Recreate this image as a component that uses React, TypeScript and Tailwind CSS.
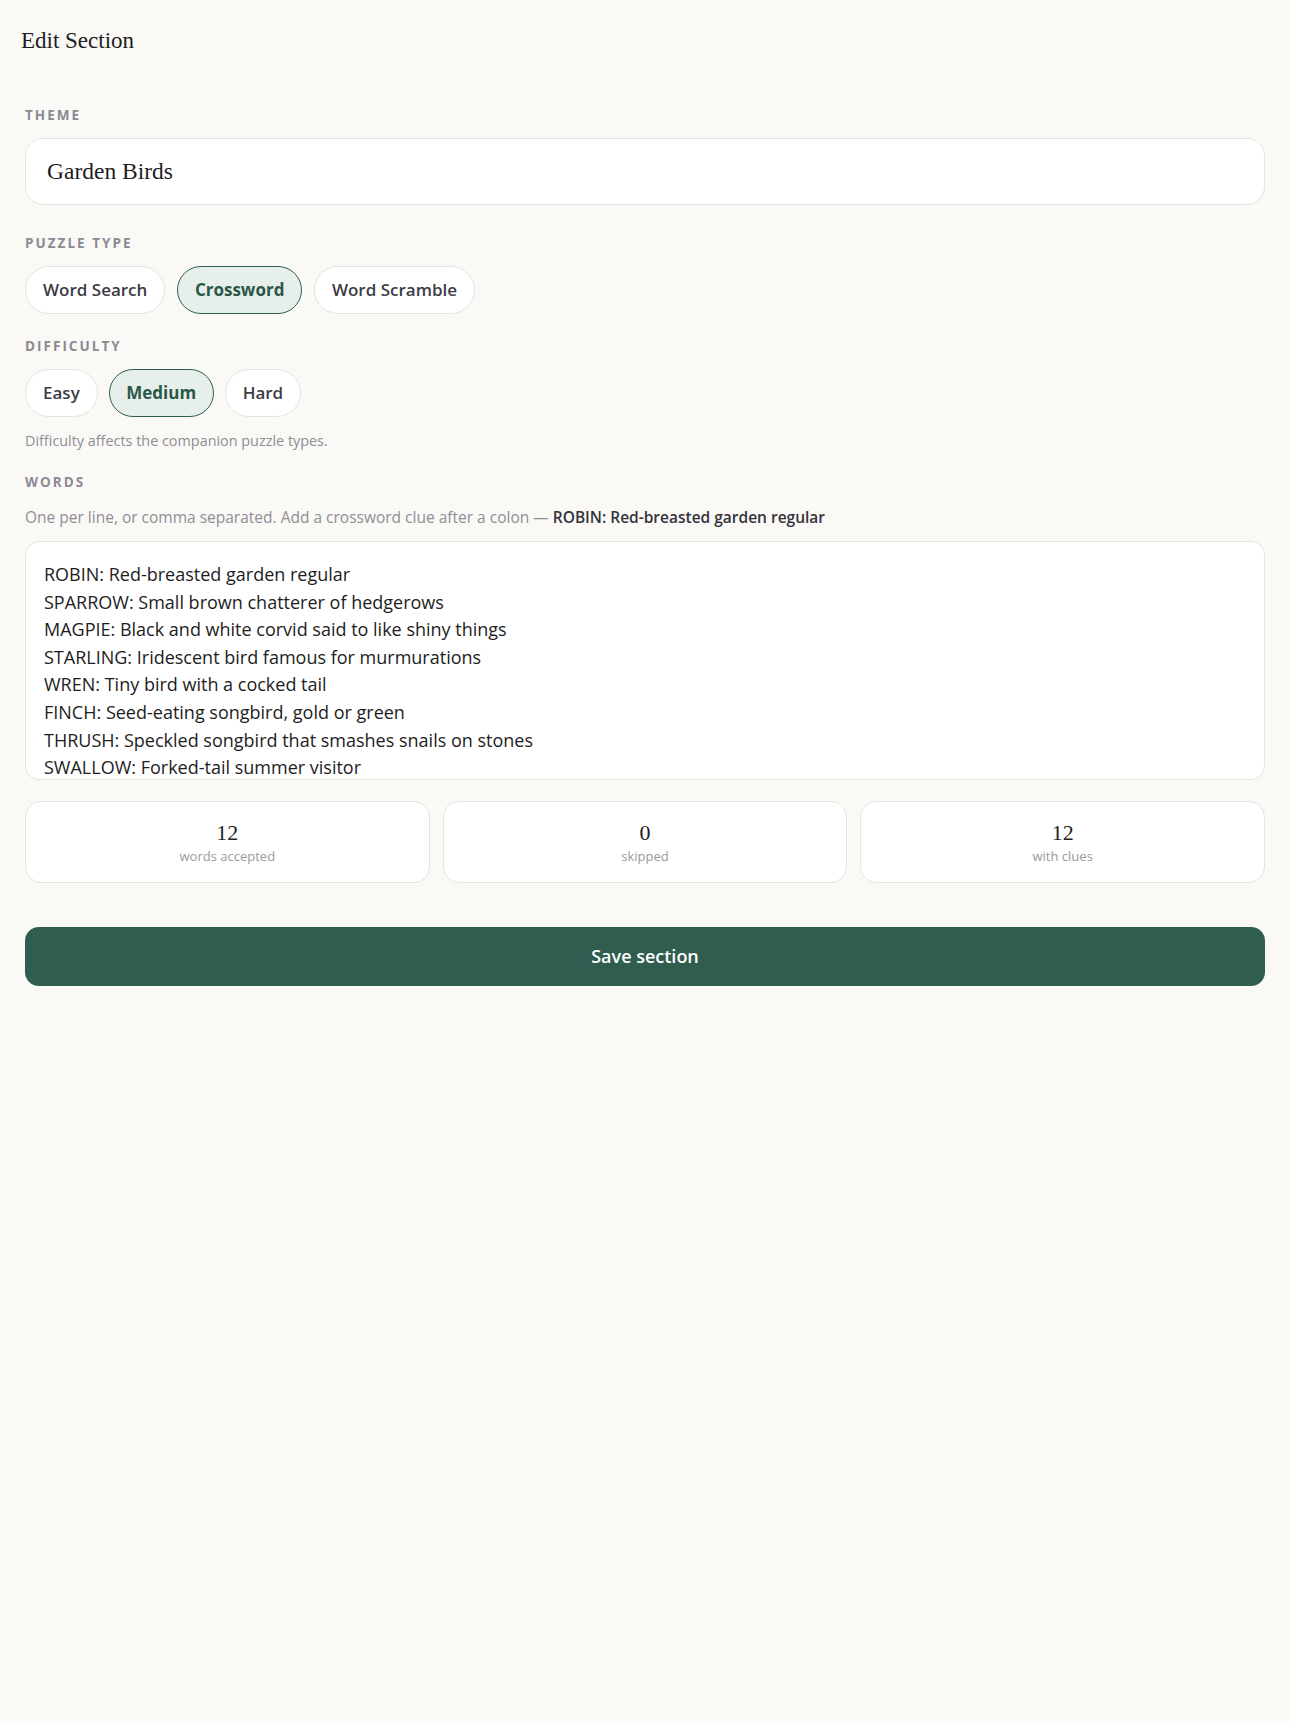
import React from "react";

const sans = "font-['Open_Sans',sans-serif]";

function Label({ children }: { children: React.ReactNode }) {
  return (
    <div className={`${sans} text-[13.5px] leading-[16px] font-bold tracking-[0.15em] text-[#8b8a93]`}>
      {children}
    </div>
  );
}

function Pill({ label, active }: { label: string; active?: boolean }) {
  return (
    <button
      className={
        active
          ? `${sans} h-[48px] px-[16.5px] rounded-full border border-[#2f5e50] bg-[#e6efea] text-[#2b5848] text-[17px] font-bold`
          : `${sans} h-[48px] px-[17px] rounded-full border border-[#e6e4e0] bg-white text-[#3c3c46] text-[17px] font-semibold`
      }
    >
      {label}
    </button>
  );
}

function Stat({ value, label }: { value: string; label: string }) {
  return (
    <div className="flex-1 h-[82px] rounded-[16px] border border-[#e6e4e0] bg-white flex flex-col items-center justify-center">
      <div className="font-['Liberation_Serif',Georgia,serif] text-[22px] leading-[26px] text-[#1f1f24]">{value}</div>
      <div className={`${sans} text-[13px] leading-[18px] text-[#9a99a1] mt-[1px]`}>{label}</div>
    </div>
  );
}

const words = [
  "ROBIN: Red-breasted garden regular",
  "SPARROW: Small brown chatterer of hedgerows",
  "MAGPIE: Black and white corvid said to like shiny things",
  "STARLING: Iridescent bird famous for murmurations",
  "WREN: Tiny bird with a cocked tail",
  "FINCH: Seed-eating songbird, gold or green",
  "THRUSH: Speckled songbird that smashes snails on stones",
  "SWALLOW: Forked-tail summer visitor",
  "BLACKBIRD: Yellow-billed singer at dusk",
  "BLUETIT: Small acrobat at the feeder",
  "NUTHATCH: Climbs down trunks head first",
  "DUNNOCK: Shy brown bird of the undergrowth",
].join("\n");

export default function App() {
  return (
    <div className="min-h-screen bg-[#faf9f6]">
      <div className="px-[21px] pt-[27px]">
        <h1 className="font-['Liberation_Serif',Georgia,serif] text-[23px] leading-[28px] text-[#1d1d22]">Edit Section</h1>
      </div>
      <div className="px-[25px] pt-[52px]">
        <Label>THEME</Label>
        <div className="mt-[15px] h-[67px] rounded-[18px] border border-[#e6e4e0] bg-white flex items-center px-[21px]">
          <span className="font-['Liberation_Serif',Georgia,serif] text-[23.5px] text-[#1d1d22]">Garden Birds</span>
        </div>

        <div className="mt-[30px]">
          <Label>PUZZLE TYPE</Label>
        </div>
        <div className="mt-[15px] flex gap-[12px]">
          <Pill label="Word Search" />
          <Pill label="Crossword" active />
          <Pill label="Word Scramble" />
        </div>

        <div className="mt-[24px]">
          <Label>DIFFICULTY</Label>
        </div>
        <div className="mt-[15px] flex gap-[11px]">
          <Pill label="Easy" />
          <Pill label="Medium" active />
          <Pill label="Hard" />
        </div>

        <p className={`${sans} mt-[14px] text-[14.4px] leading-[20px] text-[#8f8e95]`}>
          Difficulty affects the companion puzzle types.
        </p>

        <div className="mt-[23px]">
          <Label>WORDS</Label>
        </div>
        <p className={`${sans} mt-[16px] text-[15.5px] leading-[22px] text-[#8f8e95]`}>
          One per line, or comma separated. Add a crossword clue after a colon —{" "}
          <span className="font-semibold text-[#33333b]">ROBIN: Red-breasted garden regular</span>
        </p>

        <textarea
          readOnly
          value={words}
          className={`${sans} mt-[13px] block w-full h-[239px] resize-none overflow-hidden rounded-[14px] border border-[#e6e4e0] bg-white px-[18px] pt-[19px] text-[18px] leading-[27.6px] text-[#1d1d22] outline-none`}
        />

        <div className="mt-[21px] flex gap-[13px]">
          <Stat value="12" label="words accepted" />
          <Stat value="0" label="skipped" />
          <Stat value="12" label="with clues" />
        </div>

        <button
          className={`${sans} mt-[44px] w-full h-[59px] rounded-[14px] bg-[#2f5d50] text-white text-[18px] font-semibold`}
        >
          Save section
        </button>
      </div>
    </div>
  );
}
